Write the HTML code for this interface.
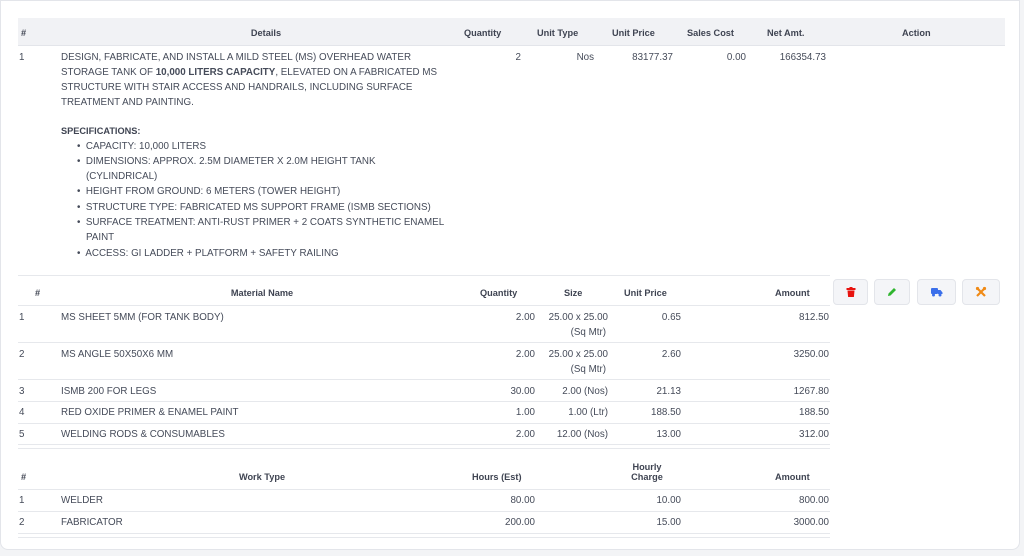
<!DOCTYPE html>
<html><head><meta charset="utf-8"><style>
*{margin:0;padding:0;box-sizing:border-box}
body{width:1024px;height:556px;background:#f3f4f6;font-family:"Liberation Sans",sans-serif;color:#454b59;position:relative;overflow:hidden}
.card{position:absolute;left:0;top:0;width:1020px;height:550px;background:#fff;border:1px solid #e3e5ea;border-radius:0 0 8px 8px}
.t{position:absolute;font-size:9.8px;white-space:nowrap;line-height:11px;margin-top:1px}
.b{font-weight:bold;color:#3f4452;font-size:9.2px}
.r{text-align:right}
.c{text-align:center}
.ln{position:absolute;height:1px;background:#e6e8ec}
.btn{position:absolute;top:279px;height:26px;background:#f4f5f8;border:1px solid #e3e5ea;border-radius:4px}
.btn svg{position:absolute;left:50%;top:50%;transform:translate(-50%,-50%)}
</style></head><body>
<div class="card"></div>
<div style="position:absolute;left:18px;top:18px;width:987px;height:28px;background:#f1f2f5;border-bottom:1px solid #e3e5ea"></div>
<div class="t b" style="left:21px;top:27px">#</div>
<div class="t b c" style="left:216px;width:100px;top:27px">Details</div>
<div class="t b" style="left:464px;top:27px">Quantity</div>
<div class="t b" style="left:537px;top:27px">Unit Type</div>
<div class="t b" style="left:612px;top:27px">Unit Price</div>
<div class="t b" style="left:687px;top:27px">Sales Cost</div>
<div class="t b" style="left:767px;top:27px">Net Amt.</div>
<div class="t b" style="left:902px;top:27px">Action</div>

<div class="t" style="left:19px;top:51px">1</div>
<div class="t" style="left:61px;top:51px">DESIGN, FABRICATE, AND INSTALL A MILD STEEL (MS) OVERHEAD WATER</div>
<div class="t" style="left:61px;top:66px">STORAGE TANK OF <b>10,000 LITERS CAPACITY</b>, ELEVATED ON A FABRICATED MS</div>
<div class="t" style="left:61px;top:81px">STRUCTURE WITH STAIR ACCESS AND HANDRAILS, INCLUDING SURFACE</div>
<div class="t" style="left:61px;top:96px">TREATMENT AND PAINTING.</div>
<div class="t b" style="left:61px;top:125px">SPECIFICATIONS:</div>
<div class="t" style="left:77px;top:140px">•&nbsp; CAPACITY: 10,000 LITERS</div>
<div class="t" style="left:77px;top:155px">•&nbsp; DIMENSIONS: APPROX. 2.5M DIAMETER X 2.0M HEIGHT TANK</div>
<div class="t" style="left:86px;top:170px">(CYLINDRICAL)</div>
<div class="t" style="left:77px;top:185px">•&nbsp; HEIGHT FROM GROUND: 6 METERS (TOWER HEIGHT)</div>
<div class="t" style="left:77px;top:201px">•&nbsp; STRUCTURE TYPE: FABRICATED MS SUPPORT FRAME (ISMB SECTIONS)</div>
<div class="t" style="left:77px;top:216px">•&nbsp; SURFACE TREATMENT: ANTI-RUST PRIMER + 2 COATS SYNTHETIC ENAMEL</div>
<div class="t" style="left:86px;top:231px">PAINT</div>
<div class="t" style="left:77px;top:247px">•&nbsp; ACCESS: GI LADDER + PLATFORM + SAFETY RAILING</div>
<div class="t r" style="left:480px;width:41px;top:51px">2</div>
<div class="t r" style="left:550px;width:44px;top:51px">Nos</div>
<div class="t r" style="left:620px;width:53px;top:51px">83177.37</div>
<div class="t r" style="left:700px;width:46px;top:51px">0.00</div>
<div class="t r" style="left:770px;width:56px;top:51px">166354.73</div>

<div class="ln" style="left:18px;width:812px;top:275px"></div>
<div class="t b" style="left:35px;top:287px">#</div>
<div class="t b c" style="left:200px;width:124px;top:287px">Material Name</div>
<div class="t b" style="left:480px;top:287px">Quantity</div>
<div class="t b" style="left:564px;top:287px">Size</div>
<div class="t b" style="left:624px;top:287px">Unit Price</div>
<div class="t b" style="left:775px;top:287px">Amount</div>
<div class="ln" style="left:18px;width:812px;top:305px"></div>

<div class="t" style="left:19px;top:311px">1</div><div class="t" style="left:61px;top:311px">MS SHEET 5MM (FOR TANK BODY)</div>
<div class="t r" style="left:470px;width:65px;top:311px">2.00</div><div class="t r" style="left:530px;width:78px;top:311px">25.00 x 25.00</div><div class="t r" style="left:540px;width:66px;top:326px">(Sq Mtr)</div>
<div class="t r" style="left:620px;width:61px;top:311px">0.65</div><div class="t r" style="left:740px;width:89px;top:311px">812.50</div>
<div class="ln" style="left:18px;width:812px;top:342px"></div>
<div class="t" style="left:19px;top:348px">2</div><div class="t" style="left:61px;top:348px">MS ANGLE 50X50X6 MM</div>
<div class="t r" style="left:470px;width:65px;top:348px">2.00</div><div class="t r" style="left:530px;width:78px;top:348px">25.00 x 25.00</div><div class="t r" style="left:540px;width:66px;top:363px">(Sq Mtr)</div>
<div class="t r" style="left:620px;width:61px;top:348px">2.60</div><div class="t r" style="left:740px;width:89px;top:348px">3250.00</div>
<div class="ln" style="left:18px;width:812px;top:379px"></div>
<div class="t" style="left:19px;top:385px">3</div><div class="t" style="left:61px;top:385px">ISMB 200 FOR LEGS</div>
<div class="t r" style="left:470px;width:65px;top:385px">30.00</div><div class="t r" style="left:530px;width:78px;top:385px">2.00 (Nos)</div>
<div class="t r" style="left:620px;width:61px;top:385px">21.13</div><div class="t r" style="left:740px;width:89px;top:385px">1267.80</div>
<div class="ln" style="left:18px;width:812px;top:401px"></div>
<div class="t" style="left:19px;top:406px">4</div><div class="t" style="left:61px;top:406px">RED OXIDE PRIMER &amp; ENAMEL PAINT</div>
<div class="t r" style="left:470px;width:65px;top:406px">1.00</div><div class="t r" style="left:530px;width:78px;top:406px">1.00 (Ltr)</div>
<div class="t r" style="left:620px;width:61px;top:406px">188.50</div><div class="t r" style="left:740px;width:89px;top:406px">188.50</div>
<div class="ln" style="left:18px;width:812px;top:423px"></div>
<div class="t" style="left:19px;top:428px">5</div><div class="t" style="left:61px;top:428px">WELDING RODS &amp; CONSUMABLES</div>
<div class="t r" style="left:470px;width:65px;top:428px">2.00</div><div class="t r" style="left:530px;width:78px;top:428px">12.00 (Nos)</div>
<div class="t r" style="left:620px;width:61px;top:428px">13.00</div><div class="t r" style="left:740px;width:89px;top:428px">312.00</div>
<div class="ln" style="left:18px;width:812px;top:444px"></div>
<div class="ln" style="left:18px;width:812px;top:448px"></div>

<div class="t b" style="left:21px;top:471px">#</div>
<div class="t b c" style="left:212px;width:100px;top:471px">Work Type</div>
<div class="t b" style="left:472px;top:471px">Hours (Est)</div>
<div class="t b c" style="left:620px;width:54px;top:461px">Hourly</div>
<div class="t b c" style="left:620px;width:54px;top:471px">Charge</div>
<div class="t b" style="left:775px;top:471px">Amount</div>
<div class="ln" style="left:18px;width:812px;top:489px"></div>
<div class="t" style="left:19px;top:494px">1</div><div class="t" style="left:61px;top:494px">WELDER</div>
<div class="t r" style="left:470px;width:65px;top:494px">80.00</div><div class="t r" style="left:620px;width:61px;top:494px">10.00</div><div class="t r" style="left:740px;width:89px;top:494px">800.00</div>
<div class="ln" style="left:18px;width:812px;top:511px"></div>
<div class="t" style="left:19px;top:516px">2</div><div class="t" style="left:61px;top:516px">FABRICATOR</div>
<div class="t r" style="left:470px;width:65px;top:516px">200.00</div><div class="t r" style="left:620px;width:61px;top:516px">15.00</div><div class="t r" style="left:740px;width:89px;top:516px">3000.00</div>
<div class="ln" style="left:18px;width:812px;top:533px"></div>
<div class="ln" style="left:18px;width:812px;top:537px"></div>

<div class="btn" style="left:833px;width:35px"><svg width="9" height="10" viewBox="0 0 9 10"><rect x="0" y="1" width="9" height="2" fill="#e8130f"/><rect x="3" y="0" width="3" height="1" fill="#e8130f"/><path d="M1 3.5h7l-.6 6.5H1.6z" fill="#e8130f"/></svg></div>
<div class="btn" style="left:874px;width:36px"><svg width="10" height="10" viewBox="0 0 10 10"><path d="M1 9l.5-2.5L7 1l2 2-5.5 5.5z" fill="#2fb52f"/></svg></div>
<div class="btn" style="left:917px;width:39px"><svg width="12" height="10" viewBox="0 0 12 10"><rect x="0" y="1" width="7" height="6" rx="1" fill="#3b6fea"/><path d="M7 3h2.5l2 2.5V7H7z" fill="#3b6fea"/><circle cx="2.5" cy="8" r="1.5" fill="#3b6fea"/><circle cx="9" cy="8" r="1.5" fill="#3b6fea"/></svg></div>
<div class="btn" style="left:962px;width:38px"><svg width="11" height="11" viewBox="0 0 11 11"><path d="M1.5 1.5l8 8M9.5 1.5l-8 8" stroke="#f08a16" stroke-width="2.2"/><circle cx="2" cy="2" r="1.6" fill="#f08a16"/><circle cx="9" cy="2" r="1.6" fill="#f08a16"/></svg></div>
</body></html>
